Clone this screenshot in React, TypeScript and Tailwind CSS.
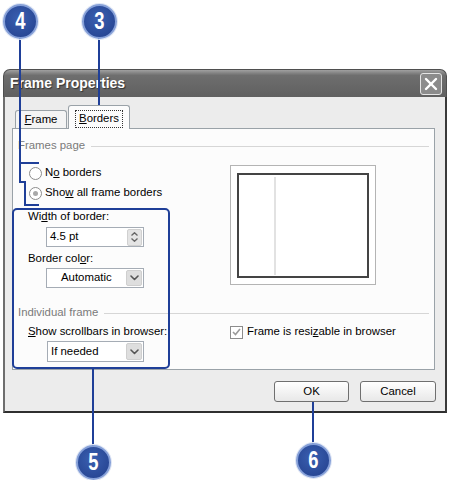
import React from 'react';

const BLUE = '#1f3f98';

function Callout({ n, className }: { n: string; className: string }) {
  return (
    <div
      className={`absolute w-[35px] h-[35px] rounded-full border-2 border-[#86a0d8] bg-[radial-gradient(circle_at_45%_40%,#3a5fb0,#223f8c)] shadow-[0_0_0_1px_#dfe6f5] flex items-center justify-center ${className}`}
    >
      <span className="inline-block scale-x-[0.8] text-[23px] font-bold leading-none text-white font-['Liberation_Sans',Arial,sans-serif]">
        {n}
      </span>
    </div>
  );
}

function Radio({ checked = false }: { checked?: boolean }) {
  return (
    <span className="w-[13px] h-[13px] rounded-full border border-[#8c8c8c] bg-white flex items-center justify-center shrink-0">
      {checked && <span className="w-[5px] h-[5px] rounded-full bg-[#a8a8a8]" />}
    </span>
  );
}

function Chevron() {
  return (
    <svg width="9" height="6" viewBox="0 0 9 6" fill="none" stroke="#555" strokeWidth="1.6" strokeLinecap="round" strokeLinejoin="round">
      <polyline points="1,1 4.5,4.5 8,1" />
    </svg>
  );
}

function SelectBox({ value, center = false, className = '' }: { value: string; center?: boolean; className?: string }) {
  return (
    <div className={`flex items-center bg-white border border-[#a5acb5] ${className}`}>
      <span className={`flex-1 ${center ? 'pl-[14px]' : 'pl-[3px]'}`}>{value}</span>
      <span className="w-[16px] h-[calc(100%-2px)] mr-px rounded-[2px] bg-[#dedede] border border-[#cfcfcf] flex items-center justify-center">
        <Chevron />
      </span>
    </div>
  );
}

export default function App() {
  return (
    <div className="relative w-[450px] h-[480px] bg-white overflow-hidden text-[11.4px] text-black font-['Liberation_Sans',Arial,sans-serif]">
      <div className="pt-[69px] pl-[3px]">
        <div className="w-[444px] h-[344px] flex flex-col">
          {/* title bar */}
          <div className="h-[28px] rounded-t-[7px] bg-gradient-to-b from-[#a0a0a0] via-[#6e6e6e] via-20% to-[#606060] border border-b-0 border-[#4f4f4f] flex items-center justify-between pl-[6px] pr-[4px]">
            <span className="text-white font-bold text-[14px] [text-shadow:1px_1px_1px_#333]">Frame Properties</span>
            <span className="w-[22px] h-[22px] rounded-[3px] border border-[#e4e4e4] bg-[#8b8b8b] flex items-center justify-center">
              <svg width="14" height="14" viewBox="0 0 14 14" stroke="white" strokeWidth="2.4" strokeLinecap="round">
                <line x1="2" y1="2" x2="12" y2="12" />
                <line x1="12" y1="2" x2="2" y2="12" />
              </svg>
            </span>
          </div>

          {/* body */}
          <div className="flex-1 bg-[#ececec] border-l-2 border-l-[#6e6e6e] border-r-2 border-r-[#3a3a3a] border-b-2 border-b-[#2f2f2f] flex flex-col">
            <div className="ml-[7px] mt-[8px] flex items-end h-[23px]">
              <div className="ml-[3px] w-[52px] h-[18px] rounded-t-[3px] border border-b-0 border-[#9aa2a8] bg-[#f4f4f4] flex items-center justify-center">
                <span><u>F</u>rame</span>
              </div>
              <div className="relative z-10 -mb-px ml-px w-[62px] h-[24px] rounded-t-[3px] border border-b-0 border-[#9aa2a8] bg-[#fcfcfc] flex items-center justify-center">
                <span className="border border-dotted border-[#333] px-[3px] h-[18px] flex items-center mt-[3px]"><u>B</u>orders</span>
              </div>
            </div>

            {/* tab panel */}
            <div className="ml-[7px] w-[423px] h-[242px] border border-[#9aa2a8] bg-[#fcfcfc] flex flex-col">
              <div className="mt-[10px] h-[14px] flex items-center pl-[5px] pr-[5px]">
                <span className="text-[#7a7a7a]">Frames page</span>
                <span className="flex-1 h-px bg-[#d6d6d6] ml-[6px]" />
              </div>

              <div className="mt-[12px] grid grid-cols-[217px_1fr]">
                <div className="flex flex-col">
                  <div className="h-[16px] flex items-center pl-[16px] gap-[3px]">
                    <Radio />
                    <span>N<u>o</u> borders</span>
                  </div>
                  <div className="mt-[4px] h-[16px] flex items-center pl-[16px] gap-[3px]">
                    <Radio checked />
                    <span>Sho<u>w</u> all frame borders</span>
                  </div>
                  <div className="mt-[9px] h-[14px] flex items-center pl-[15px]">
                    Wi<u>d</u>th of border:
                  </div>
                  <div className="mt-[3px] ml-[33px] w-[98px] h-[20px] flex items-center bg-white border border-[#a5acb5]">
                    <span className="flex-1 pl-[3px]">4.5 pt</span>
                    <span className="w-[15px] h-[17px] mr-px rounded-[2px] bg-[#e4e4e4] border border-[#d0d0d0] flex flex-col items-center justify-center gap-[2px]">
                      <svg width="7" height="4" viewBox="0 0 7 4" fill="none" stroke="#666" strokeWidth="1.3"><polyline points="0.5,3.5 3.5,0.7 6.5,3.5" /></svg>
                      <svg width="7" height="4" viewBox="0 0 7 4" fill="none" stroke="#666" strokeWidth="1.3"><polyline points="0.5,0.5 3.5,3.3 6.5,0.5" /></svg>
                    </span>
                  </div>
                  <div className="mt-[5px] h-[14px] flex items-center pl-[15px]">
                    Border col<u>o</u>r:
                  </div>
                  <SelectBox value="Automatic" center className="mt-[2px] ml-[33px] w-[98px] h-[20px]" />
                </div>

                <div>
                  <div className="w-[146px] h-[120px] border border-[#b4b4b4] bg-white pl-[6px] pt-[7px]">
                    <div className="w-[132px] h-[105px] border-2 border-[#444] flex">
                      <span className="ml-[35px] mt-[2px] w-[2px] h-[98px] bg-[#e2e2e2]" />
                    </div>
                  </div>
                </div>
              </div>

              <div className="mt-[18px] h-[14px] flex items-center pl-[5px] pr-[5px]">
                <span className="text-[#7a7a7a]">Individual frame</span>
                <span className="flex-1 h-px bg-[#d6d6d6] ml-[6px]" />
              </div>

              <div className="mt-[5px] grid grid-cols-[217px_1fr]">
                <div className="flex flex-col">
                  <div className="h-[14px] flex items-center pl-[15px]">
                    <span><u>S</u>how scrollbars in browser:</span>
                  </div>
                  <SelectBox value="If needed" className="mt-[2px] ml-[34px] w-[97px] h-[21px]" />
                </div>
                <div className="h-[14px] flex items-center gap-[4px]">
                  <span className="w-[13px] h-[13px] border border-[#8c8c8c] bg-white flex items-center justify-center">
                    <svg width="9" height="8" viewBox="0 0 9 8" fill="none" stroke="#9a9a9a" strokeWidth="1.6"><polyline points="1,4 3.5,6.5 8,1" /></svg>
                  </span>
                  <span>Frame is resi<u>z</u>able in browser</span>
                </div>
              </div>
            </div>

            {/* buttons */}
            <div className="mt-[11px] flex justify-end gap-[11px] pr-[9px]">
              <button className="w-[75px] h-[21px] rounded-[3px] border border-[#6f6f6f] bg-gradient-to-b from-white to-[#e8e8e8]">OK</button>
              <button className="w-[76px] h-[21px] rounded-[3px] border border-[#6f6f6f] bg-gradient-to-b from-white to-[#e8e8e8]">Cancel</button>
            </div>
          </div>
        </div>
      </div>

      {/* callout lines */}
      <svg className="absolute inset-0 pointer-events-none" width="450" height="480" fill="none" stroke={BLUE} strokeWidth="2">
        <path d="M20 36 V182 H25 V205 H39" />
        <path d="M20 163 H39" />
        <path d="M99 36 V106" />
        <rect x="13" y="209" width="156" height="159" rx="4" />
        <path d="M93 368 V446" />
        <path d="M313 402 V444" />
      </svg>

      <Callout n="4" className="left-[3px] top-[4px]" />
      <Callout n="3" className="left-[82px] top-[4px]" />
      <Callout n="5" className="left-[76px] top-[445px]" />
      <Callout n="6" className="left-[296px] top-[443px]" />
    </div>
  );
}
